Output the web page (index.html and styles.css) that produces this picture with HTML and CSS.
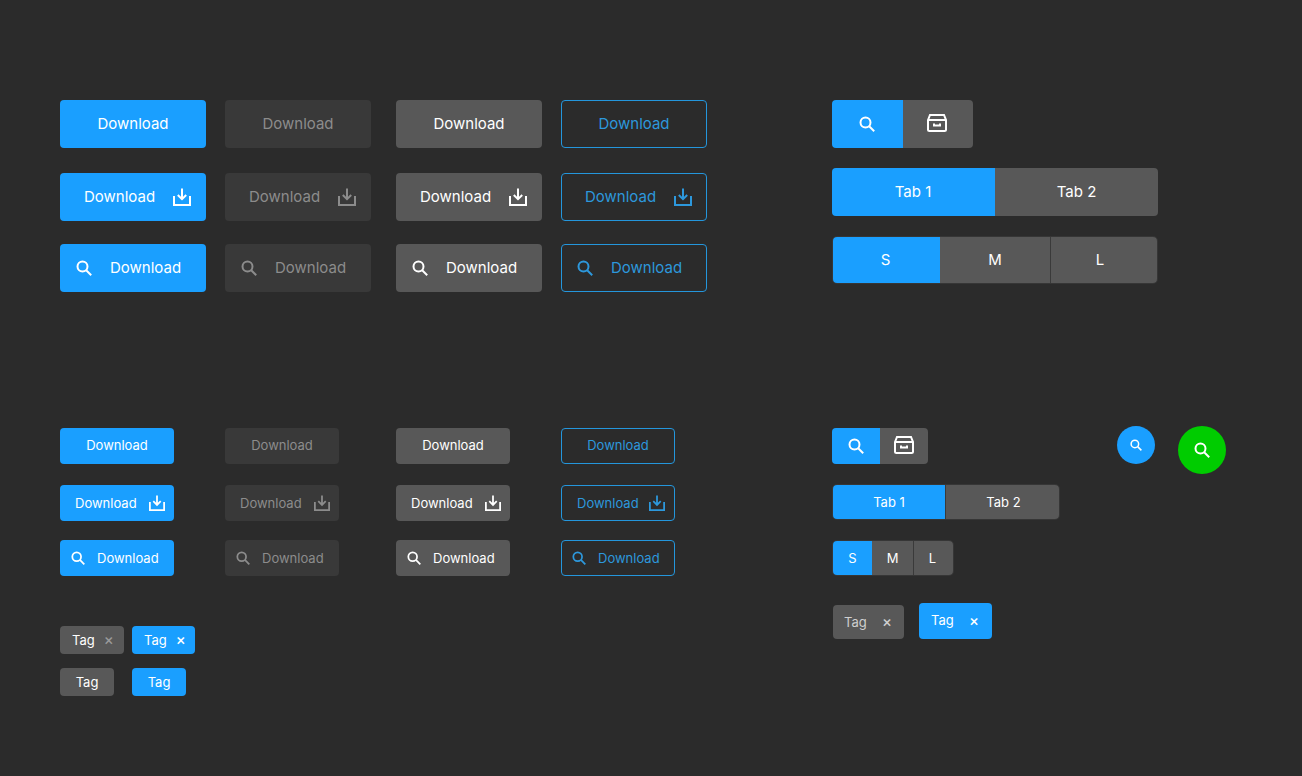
FILE: index.html
```html
<!DOCTYPE html>
<html lang="en">
<head>
<meta charset="utf-8">
<title>Buttons</title>
<link rel="stylesheet" href="styles.css">
</head>
<body>
<svg class="defs" width="0" height="0" aria-hidden="true">
  <symbol id="dl" viewBox="0 0 18 18"><path d="M1 8V17H17V8M9 0.500V11M4.800 7L9 11.200L13.200 7" fill="none" stroke="currentColor" stroke-width="2"/></symbol>
  <symbol id="search" viewBox="0 0 16 16"><circle cx="6.500" cy="6.500" r="5" fill="none" stroke="currentColor" stroke-width="2"/><path d="M10.200 10.200L15.200 15.200" fill="none" stroke="currentColor" stroke-width="2"/></symbol>
  <symbol id="box" viewBox="0 0 20 18"><path d="M1 6L3 1H17L19 6V15.500A1.500 1.500 0 0 1 17.500 17H2.500A1.500 1.500 0 0 1 1 15.500ZM1 6H19M7 9.500V11.500H13V9.500" fill="none" stroke="currentColor" stroke-width="2"/></symbol>
</svg>
<main class="page">
  <section class="top">
    <div class="grid grid-lg">
      <a class="btn lg blue">Download</a><a class="btn lg dim">Download</a><a class="btn lg gray">Download</a><a class="btn lg line">Download</a>
      <a class="btn lg blue end"><span>Download</span><svg class="i-dl"><use href="#dl"/></svg></a>
      <a class="btn lg dim end"><span>Download</span><svg class="i-dl"><use href="#dl"/></svg></a>
      <a class="btn lg gray end"><span>Download</span><svg class="i-dl"><use href="#dl"/></svg></a>
      <a class="btn lg line end"><span>Download</span><svg class="i-dl"><use href="#dl"/></svg></a>
      <a class="btn lg blue start"><svg class="i-s"><use href="#search"/></svg><span>Download</span></a>
      <a class="btn lg dim start"><svg class="i-s"><use href="#search"/></svg><span>Download</span></a>
      <a class="btn lg gray start"><svg class="i-s"><use href="#search"/></svg><span>Download</span></a>
      <a class="btn lg line start"><svg class="i-s"><use href="#search"/></svg><span>Download</span></a>
    </div>
    <div class="side side-lg">
      <div class="seg seg-icons-lg">
        <a class="cell blue"><svg class="i-s"><use href="#search"/></svg></a>
        <a class="cell gray"><svg class="i-box"><use href="#box"/></svg></a>
      </div>
      <div class="seg seg-tabs-lg">
        <a class="cell blue">Tab 1</a><a class="cell gray">Tab 2</a>
      </div>
      <div class="seg seg-sml-lg">
        <a class="cell blue">S</a><a class="cell gray">M</a><a class="cell gray">L</a>
      </div>
    </div>
  </section>
  <section class="bottom">
    <div class="bottom-left">
      <div class="grid grid-sm">
        <a class="btn sm blue">Download</a><a class="btn sm dim">Download</a><a class="btn sm gray">Download</a><a class="btn sm line">Download</a>
        <a class="btn sm blue end"><span>Download</span><svg class="i-dl"><use href="#dl"/></svg></a>
        <a class="btn sm dim end"><span>Download</span><svg class="i-dl"><use href="#dl"/></svg></a>
        <a class="btn sm gray end"><span>Download</span><svg class="i-dl"><use href="#dl"/></svg></a>
        <a class="btn sm line end"><span>Download</span><svg class="i-dl"><use href="#dl"/></svg></a>
        <a class="btn sm blue start"><svg class="i-s"><use href="#search"/></svg><span>Download</span></a>
        <a class="btn sm dim start"><svg class="i-s"><use href="#search"/></svg><span>Download</span></a>
        <a class="btn sm gray start"><svg class="i-s"><use href="#search"/></svg><span>Download</span></a>
        <a class="btn sm line start"><svg class="i-s"><use href="#search"/></svg><span>Download</span></a>
      </div>
      <div class="tags">
        <a class="tag gray w64">Tag<span class="x muted">×</span></a>
        <a class="tag blue w63">Tag<span class="x">×</span></a>
        <a class="tag gray plain">Tag</a>
        <a class="tag blue plain">Tag</a>
      </div>
    </div>
    <div class="side side-sm">
      <div class="seg seg-icons-sm">
        <a class="cell blue"><svg class="i-s"><use href="#search"/></svg></a>
        <a class="cell gray"><svg class="i-box"><use href="#box"/></svg></a>
      </div>
      <div class="seg seg-tabs-sm">
        <a class="cell blue">Tab 1</a><a class="cell gray">Tab 2</a>
      </div>
      <div class="seg seg-sml-sm">
        <a class="cell blue">S</a><a class="cell gray">M</a><a class="cell gray">L</a>
      </div>
      <div class="big-tags">
        <a class="big-tag gray">Tag<span class="x">×</span></a>
        <a class="big-tag blue raised">Tag<span class="x">×</span></a>
      </div>
    </div>
    <div class="fabs">
      <a class="fab fab-blue"><svg><use href="#search"/></svg></a>
      <a class="fab fab-green"><svg><use href="#search"/></svg></a>
    </div>
  </section>
</main>
</body>
</html>
```
FILE: styles.css
```css
* { box-sizing: border-box; }
html, body { margin: 0; height: 100%; }
body {
  background: #2b2b2b;
  color: #fff;
  font-family: Inter, "Liberation Sans", sans-serif;
  overflow: hidden;
}
.defs { position: absolute; }
svg { display: block; flex: none; }
.page { width: 1302px; height: 776px; padding: 100px 0 0 60px; }

.top { display: flex; height: 328px; }
.bottom { display: flex; }

.grid { display: grid; justify-items: start; align-content: start; }
.grid-lg { width: 772px; grid-template-columns: 165px 171px 165px 146px; }
.grid-lg > :nth-child(n+5) { margin-top: 25px; }
.grid-lg > :nth-child(n+9) { margin-top: 23px; }
.grid-sm { grid-template-columns: 165px 171px 165px 114px; }
.grid-sm > :nth-child(n+5) { margin-top: 21px; }
.grid-sm > :nth-child(n+9) { margin-top: 19px; }
.grid-sm > :nth-child(-n+4) { padding-bottom: 2px; }

.btn { display: flex; align-items: center; justify-content: center; border-radius: 4px; padding-bottom: 1px; }
.lg { width: 146px; height: 48px; font-size: 15px; }
.sm { width: 114px; height: 36px; font-size: 13px; }
.blue { background: #1a9fff; color: #fff; }
.gray { background: #585858; color: #fff; }
.dim { background: #393939; color: #8c8c8c; }
.line { border: 1px solid #2496dc; color: #2d98dc; }

.lg.end { justify-content: flex-start; padding-left: 24px; gap: 18px; }
.lg.start { justify-content: flex-start; padding-left: 16px; gap: 18px; }
.sm.end { justify-content: flex-start; padding-left: 15px; gap: 12px; }
.sm.start { justify-content: flex-start; padding-left: 11px; gap: 12px; }
.line.end { padding-left: 23px; }
.line.start { padding-left: 15px; }
.sm.line.end { padding-left: 15px; gap: 10px; }
.sm.line.start { padding-left: 10px; }

.lg .i-dl { width: 18px; height: 18px; }
.lg .i-s { width: 16px; height: 16px; margin-top: 1px; }
.sm .i-dl { width: 16px; height: 16px; }
.sm .i-s { width: 14px; height: 14px; margin-top: 1px; }

.side { display: flex; flex-direction: column; align-items: flex-start; }
.seg { display: flex; border-radius: 4px; overflow: hidden; }
.cell { display: flex; align-items: center; justify-content: center; flex: 1; padding-bottom: 1px; }
.seg .gray + .gray { border-left: 1px solid #3a3a3a; }
.seg-sml-lg, .seg-sml-sm, .seg-tabs-sm { box-shadow: 0 0 0 1px #363636; }

.seg-icons-lg { width: 141px; height: 48px; }
.seg-icons-lg .cell:first-child { flex: 0 0 71px; }
.seg-icons-lg .i-s { width: 16px; height: 16px; margin-right: 1px; }
.seg-icons-lg .i-box { width: 20px; height: 18px; margin: -1px 2px 0 0; }
.seg-tabs-lg { width: 326px; height: 48px; margin-top: 20px; font-size: 15px; }
.seg-tabs-lg .cell { flex: 0 0 163px; }
.seg-tabs-lg .blue { padding-right: 1px; }
.seg-sml-lg { width: 324px; height: 46px; margin: 21px 0 0 1px; font-size: 15px; }
.seg-sml-lg .cell:first-child { flex: 0 0 107px; padding-right: 2px; }
.seg-sml-lg .cell:nth-child(2) { flex: 0 0 110px; }
.seg-sml-lg .cell:last-child { flex: 0 0 107px; padding-right: 8px; }

.bottom-left { width: 772px; }
.tags { display: grid; grid-template-columns: 72px auto; justify-content: start; row-gap: 14px; margin-top: 50px; font-size: 13px; }
.tag { display: flex; align-items: center; height: 28px; padding: 0 0 1px 12px; border-radius: 4px; }
.w64 { width: 64px; gap: 9px; }
.w63 { width: 63px; gap: 9px; }
.plain { width: 54px; padding-left: 0; justify-content: center; }
.x { font-size: 15px; line-height: 1; font-weight: 500; }
.muted { color: #9a9a9a; }

.seg-icons-sm { width: 96px; height: 36px; }
.seg-icons-sm .i-s { width: 16px; height: 16px; }
.seg-icons-sm .i-box { width: 20px; height: 18px; margin-top: -2px; }
.seg-tabs-sm { width: 226px; height: 34px; margin: 21px 0 0 1px; font-size: 13px; }
.seg-tabs-sm .cell:first-child { flex: 0 0 112px; }
.seg-tabs-sm .cell:last-child { flex: 0 0 114px; border-left: 1px solid #3a3a3a; padding-left: 2px; }
.seg-sml-sm { width: 120px; height: 34px; margin: 22px 0 0 1px; font-size: 13px; }
.seg-sml-sm .cell:first-child { flex: 0 0 39px; }
.seg-sml-sm .cell:nth-child(2) { flex: 0 0 41px; }
.seg-sml-sm .cell:last-child { flex: 0 0 40px; padding-right: 2px; }

.big-tags { display: flex; align-items: flex-start; gap: 15px; margin: 28px 0 0 1px; font-size: 13px; }
.big-tag { display: flex; align-items: center; justify-content: space-between; width: 71px; height: 34px; padding: 0 12px 1px 11px; border-radius: 4px; margin-top: 2px; }
.big-tag.gray { color: #cfcfcf; }
.raised { width: 73px; height: 36px; margin-top: 0; padding: 0 13px 2px 12px; }

.fabs { display: flex; align-items: flex-start; gap: 23px; margin: -2px 0 0 0; padding-left: 61px; }
.side-sm { width: 224px; }
.fab { display: flex; align-items: center; justify-content: center; border-radius: 50%; }
.fab-blue { width: 38px; height: 38px; background: #1a9fff; }
.fab-blue svg { width: 12px; height: 12px; }
.fab-green { width: 48px; height: 48px; background: #00cc00; }
.fab-green svg { width: 16px; height: 16px; }
```
